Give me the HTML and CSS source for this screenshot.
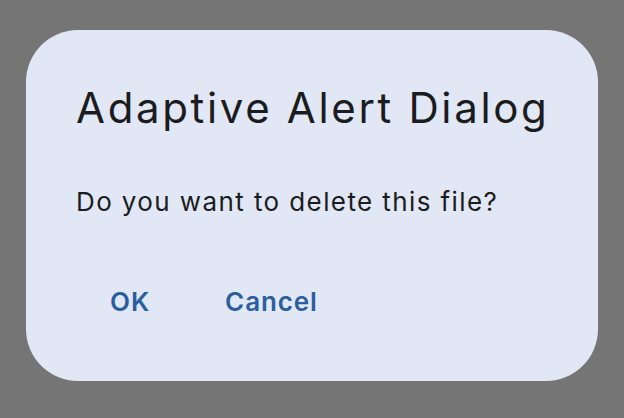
FILE: index.html
```html
<!DOCTYPE html>
<html>
<head>
<meta charset="utf-8">
<link rel="stylesheet" href="styles.css">
</head>
<body>
<div class="dialog">
  <h1 class="title">Adaptive Alert Dialog</h1>
  <p class="message">Do you want to delete this file?</p>
  <div class="actions">
    <button class="action">OK</button>
    <button class="action">Cancel</button>
  </div>
</div>
</body>
</html>
```
FILE: styles.css
```css
html, body {
  margin: 0;
  padding: 0;
  background: #757575;
  width: 624px;
  height: 418px;
  overflow: hidden;
}
body {
  padding: 30px 0 0 26px;
  box-sizing: border-box;
  font-family: Inter, "Noto Sans", sans-serif;
}
.dialog {
  width: 572px;
  height: 351px;
  box-sizing: border-box;
  background: #e1e7f4;
  border-radius: 52px;
  padding: 52px 24px 0 50px;
  display: flex;
  flex-direction: column;
}
.title {
  margin: 0;
  font-size: 42px;
  font-weight: 400;
  line-height: 52px;
  letter-spacing: 2.65px;
  white-space: nowrap;
  color: #1b1c20;
}
.message {
  margin: 52px 0 0 0;
  font-size: 26px;
  line-height: 32px;
  letter-spacing: 1.4px;
  white-space: nowrap;
  color: #1b1c20;
}
.actions {
  margin-top: 68px;
  display: flex;
  gap: 7px;
}
.action {
  border: 0;
  background: none;
  padding: 0 34px;
  font-family: inherit;
  font-size: 26px;
  font-weight: 600;
  line-height: 32px;
  letter-spacing: 0.9px;
  color: #2b5e9e;
}
```
